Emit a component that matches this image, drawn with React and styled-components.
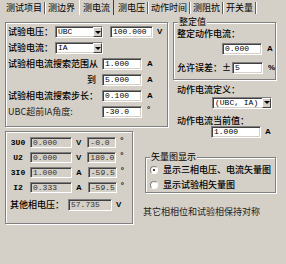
import React from "react";
import styled, { createGlobalStyle } from "styled-components";

const Global = createGlobalStyle`
  body {
    margin: 0;
    background: #d4d0c8;
  }
`;

const Page = styled.div`
  width: 286px;
  height: 264px;
  overflow: hidden;
  background: #d4d0c8;
  color: #000;
  font-family: "Noto Sans CJK SC", "Liberation Sans", sans-serif;
  font-size: 9px;
  line-height: 10px;
`;

const TabBar = styled.div`
  display: flex;
  align-items: stretch;
  height: 15px;
  padding-left: 4px;
`;

const Tab = styled.div`
  display: flex;
  align-items: center;
  white-space: nowrap;
  border-left: 1px solid ${(p) => (p.$active ? "#fff" : "transparent")};
  border-right: 1px solid ${(p) => (p.$active ? "#404040" : "transparent")};
  margin: 0 ${(p) => (p.$active ? "2px" : "0")};
  padding: 0 ${(p) => (p.$active ? "3px" : "1px")};
`;

const Sep = styled.div`
  width: 1px;
  margin: 2px 1px 1px 0;
  background: #606060;
  box-shadow: 1px 0 0 #fff;
`;

const Body = styled.div`
  display: grid;
  margin-top: 7px;
  padding-left: 5px;
  grid-template-columns: 128px 10px 25px 5px 103px;
  grid-template-rows: 105px 4px 10px auto;
`;

const Group = styled.div`
  position: relative;
  box-sizing: border-box;
  border: 1px solid #808080;
  box-shadow: 1px 1px 0 #fff, inset 1px 1px 0 #fff;
  height: ${(p) => p.$h}px;
`;

const Legend = styled.span`
  position: absolute;
  top: -6px;
  left: 4px;
  padding: 0 1px;
  background: #d4d0c8;
  white-space: nowrap;
`;

const LeftTop = styled(Group)`
  grid-column: 1 / 4;
  grid-row: 1 / 2;
  display: flex;
  flex-direction: column;
  gap: 4px;
  padding: 3px 0 0 2px;
`;

const RightTop = styled.div`
  grid-column: 5 / 6;
  grid-row: 1 / 4;
  display: flex;
  flex-direction: column;
`;

const LeftBottom = styled(Group)`
  grid-column: 1 / 2;
  grid-row: 3 / 5;
  display: flex;
  flex-direction: column;
  gap: 4px;
  padding-top: 5px;
`;

const RightBottom = styled.div`
  grid-column: 3 / 6;
  grid-row: 4 / 5;
  display: flex;
  flex-direction: column;
  padding-top: 16px;
`;

const Row = styled.div`
  display: flex;
  align-items: center;
  height: ${(p) => p.$h || 12}px;
  margin-top: ${(p) => p.$mt || 0}px;
  padding-left: ${(p) => p.$pl || 0}px;
`;

const Label = styled.span`
  flex: none;
  width: ${(p) => (p.$w ? `${p.$w}px` : "auto")};
  text-align: ${(p) => p.$align || "left"};
  white-space: nowrap;
  font-weight: ${(p) => (p.$light ? 400 : 500)};
  color: ${(p) => (p.$light ? "#222" : "#000")};
`;

const Field = styled.div`
  flex: none;
  box-sizing: border-box;
  display: flex;
  align-items: center;
  width: ${(p) => p.$w}px;
  height: ${(p) => p.$h || 12}px;
  margin-left: ${(p) => p.$ml || 0}px;
  padding-left: 2px;
  background: ${(p) => (p.$ro ? "#d4d0c8" : "#fff")};
  border: 1px solid;
  border-color: #808080 #fff #fff #808080;
  box-shadow: inset 1px 1px 0 #404040, inset -1px -1px 0 #d4d0c8;
  font-family: "Liberation Mono", monospace;
  font-size: 8px;
  color: ${(p) => (p.$ro ? "#333" : "#000")};
  white-space: nowrap;
`;

const Select = styled(Field)`
  padding-right: 0;
  justify-content: space-between;
`;

const DropBtn = styled.span`
  box-sizing: border-box;
  display: flex;
  align-items: center;
  justify-content: center;
  width: 9px;
  height: 100%;
  background: #d4d0c8;
  border: 1px solid;
  border-color: #fff #404040 #404040 #fff;
  &::after {
    content: "";
    border-left: 3px solid transparent;
    border-right: 3px solid transparent;
    border-top: 3px solid #000;
  }
`;

const Unit = styled.span`
  flex: none;
  margin-left: ${(p) => p.$ml || 4}px;
  font-family: "Liberation Sans", sans-serif;
  font-weight: 700;
  font-size: 8px;
  align-self: ${(p) => (p.$top ? "flex-start" : "center")};
  line-height: ${(p) => (p.$top ? "7px" : "10px")};
`;

const DataLabel = styled.span`
  flex: none;
  width: 24px;
  text-align: center;
  font-family: "Liberation Mono", monospace;
  font-size: 8px;
  font-weight: 700;
`;

const Radio = styled.span`
  flex: none;
  box-sizing: border-box;
  width: 8px;
  height: 8px;
  margin: 0 5px 0 4px;
  border-radius: 50%;
  background: #fff;
  border: 1px solid;
  border-color: #808080 #fff #fff #808080;
  display: flex;
  align-items: center;
  justify-content: center;
  &::after {
    content: "";
    width: 2px;
    height: 2px;
    border-radius: 50%;
    background: ${(p) => (p.$on ? "#000" : "transparent")};
  }
`;

const RadioGroup = styled(Group)`
  margin-left: 2px;
  display: flex;
  flex-direction: column;
  padding-top: 6px;
  gap: 3px;
`;

const Note = styled.div`
  margin-top: 14px;
  white-space: nowrap;
  color: #222;
`;

const tabs = ["测试项目", "测边界", "测电流", "测电压", "动作时间", "测阻抗", "开关量"];
const active = 2;

const measures = [
  { name: "3U0", v: "0.000", u: "V", a: "-0.0" },
  { name: "U2", v: "0.000", u: "V", a: "180.0" },
  { name: "3I0", v: "1.000", u: "A", a: "-59.5" },
  { name: "I2", v: "0.333", u: "A", a: "-59.5" },
];

function Combo({ w, ml, value }) {
  return (
    <Select $w={w} $ml={ml}>
      <span>{value}</span>
      <DropBtn />
    </Select>
  );
}

export default function App() {
  return (
    <Page>
      <Global />
      <TabBar>
        {tabs.map((t, i) => (
          <React.Fragment key={t}>
            <Tab $active={i === active}>{t}</Tab>
            {i !== active && i !== active - 1 && <Sep />}
          </React.Fragment>
        ))}
      </TabBar>

      <Body>
        <LeftTop $h={105}>
          <Row>
            <Label $w={47}>试验电压：</Label>
            <Combo w={48} value="UBC" />
            <Field $w={43} $ml={7}>100.000</Field>
            <Unit>V</Unit>
          </Row>
          <Row>
            <Label $w={47}>试验电流：</Label>
            <Combo w={48} value="IA" />
          </Row>
          <Row>
            <Label $w={94}>试验相电流搜索范围从</Label>
            <Field $w={40}>1.000</Field>
            <Unit $ml={5}>A</Unit>
          </Row>
          <Row>
            <Label $w={88} $align="right">到</Label>
            <Field $w={40} $ml={6}>5.000</Field>
            <Unit $ml={5}>A</Unit>
          </Row>
          <Row>
            <Label $w={94}>试验相电流搜索步长：</Label>
            <Field $w={40}>0.100</Field>
            <Unit $ml={5}>A</Unit>
          </Row>
          <Row>
            <Label $w={94} $light>UBC超前IA角度:</Label>
            <Field $w={40}>-30.0</Field>
            <Unit $ml={5} $top>°</Unit>
          </Row>
        </LeftTop>

        <RightTop>
          <Group $h={58}>
            <Legend>整定值</Legend>
            <Row $h={10} $mt={6} $pl={3}>
              <Label>整定动作电流：</Label>
            </Row>
            <Row $mt={4} $pl={48}>
              <Field $w={40}>0.000</Field>
              <Unit $ml={5}>A</Unit>
            </Row>
            <Row $mt={7} $pl={3}>
              <Label $w={55}>允许误差：±</Label>
              <Field $w={31}>5</Field>
              <Unit $ml={5}>%</Unit>
            </Row>
          </Group>
          <Row $h={10} $mt={5} $pl={4}>
            <Label>动作电流定义：</Label>
          </Row>
          <Row $h={11} $mt={2} $pl={39}>
            <Combo w={60} value="(UBC, IA)" />
          </Row>
          <Row $h={10} $mt={8} $pl={4}>
            <Label>动作电流当前值：</Label>
          </Row>
          <Row $mt={0} $pl={38}>
            <Field $w={50}>1.000</Field>
            <Unit $ml={4}>A</Unit>
          </Row>
        </RightTop>

        <LeftBottom $h={93}>
          {measures.map((m) => (
            <Row key={m.name} $h={11}>
              <DataLabel>{m.name}</DataLabel>
              <Field $w={42} $h={11} $ro>{m.v}</Field>
              <Unit $ml={4}>{m.u}</Unit>
              <Field $w={29} $h={11} $ml={6} $ro>{m.a}</Field>
              <Unit $ml={4} $top>°</Unit>
            </Row>
          ))}
          <Row $mt={2} $pl={4}>
            <Label $w={58}>其他相电压：</Label>
            <Field $w={44} $ro>57.735</Field>
            <Unit $ml={4}>V</Unit>
          </Row>
        </LeftBottom>

        <RightBottom>
          <RadioGroup $h={36}>
            <Legend>矢量图显示</Legend>
            <Row $h={12}>
              <Radio $on />
              <Label>显示三相电压、电流矢量图</Label>
            </Row>
            <Row $h={12}>
              <Radio />
              <Label>显示试验相矢量图</Label>
            </Row>
          </RadioGroup>
          <Note>其它相相位和试验相保持对称</Note>
        </RightBottom>
      </Body>
    </Page>
  );
}
